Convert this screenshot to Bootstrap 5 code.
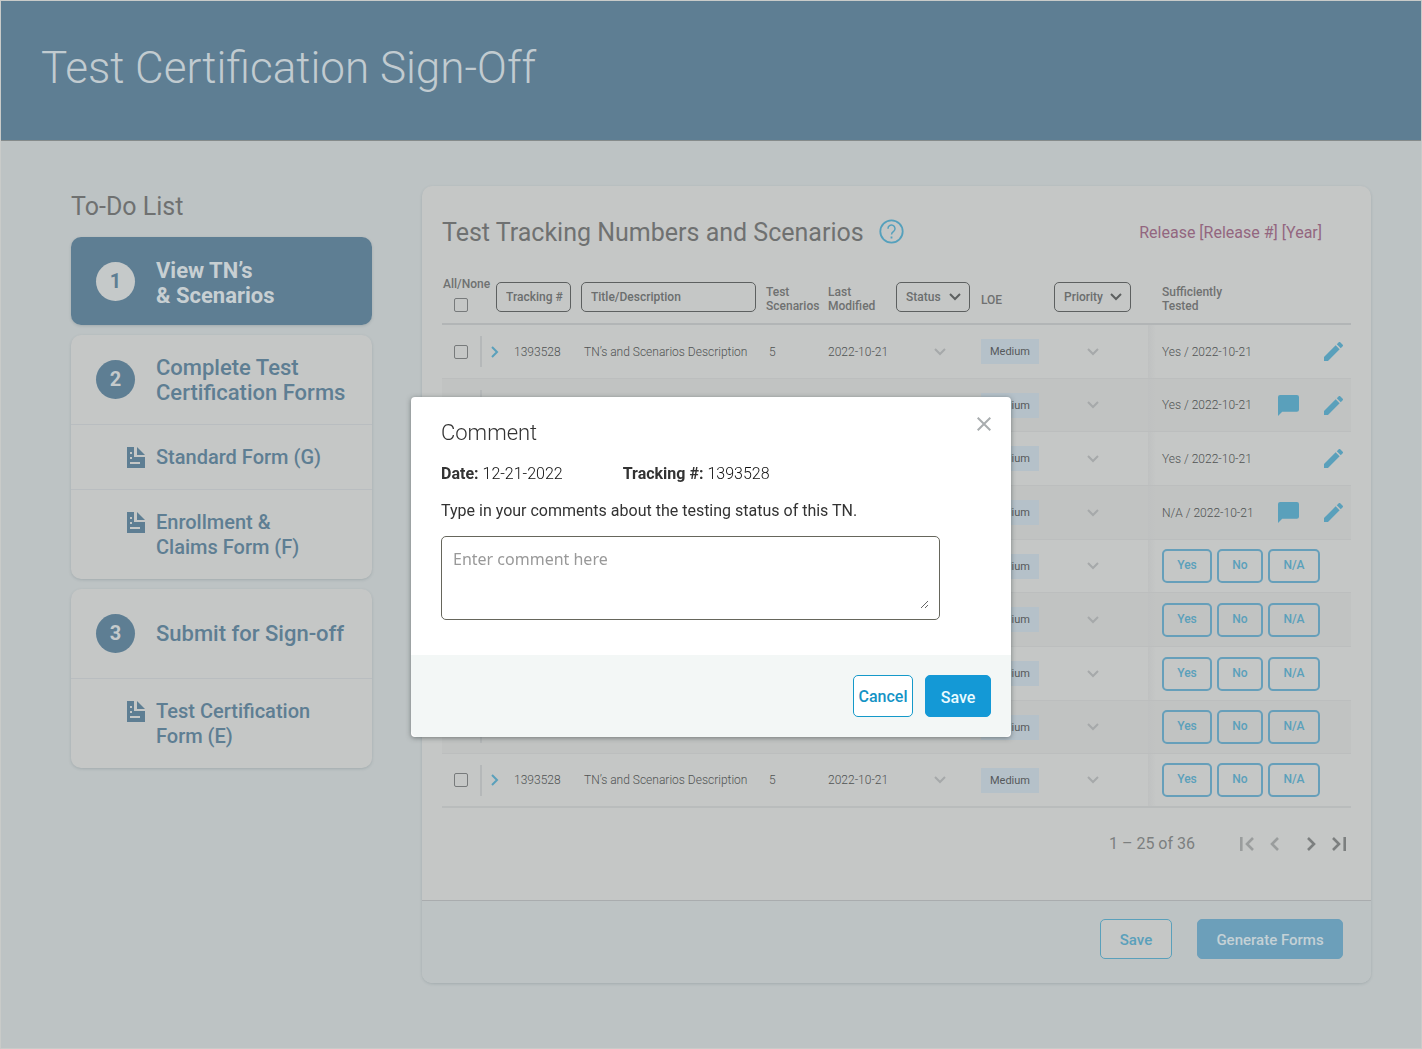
<!DOCTYPE html>
<html lang="en">
<head>
<meta charset="utf-8">
<meta name="viewport" content="width=device-width, initial-scale=1">
<title>Test Certification Sign-Off</title>
<link href="https://cdn.jsdelivr.net/npm/bootstrap@5.3.0/dist/css/bootstrap.min.css" rel="stylesheet">
<style>
  :root {
    --ink: #6f7171;
    --navy: #5e7e93;
    --sky: #5aa0bb;
    --panel: #c5c7c6;
    --page: #bdc3c4;
  }
  body { font-family: Roboto, "Liberation Sans", sans-serif; background: var(--page); color: var(--ink); min-height: 100vh; border: 1px solid #c9cbc9; }
  .site-head { background: var(--navy); border-bottom: 1px solid #858b8b; padding: 34px 40px 39px; }
  .site-head h1 { font-size: 44px; line-height: 66px; font-weight: 300; color: #c1cbd0; }
  .page-main { padding: 45px 50px 64px 70px; gap: 50px; }
  .todo { width: 301px; }
  .todo h2 { font-size: 25px; line-height: 42px; font-weight: 400; margin-bottom: 9px; }
  .todo-group { background: var(--panel); border-radius: 10px; box-shadow: 0 1px 3px rgba(60,80,90,.2); margin-bottom: 10px; overflow: hidden; }
  .todo-group a { color: var(--navy); text-decoration: none; font-size: 22px; line-height: 25px; font-weight: 500; min-height: 89px; padding: 0 24px 0 25px; }
  .todo-group a.sub-item { font-size: 20px; padding: 20px 24px 19px 56px; gap: 11px; min-height: 65px; border-top: 1px solid #b9bdc0; }
  .todo-group a.current { background: var(--navy); color: #c7cfd2; font-weight: 700; min-height: 88px; }
  .current .step-text { padding-top: 4px; }
  .doc-icon { width: 18px; height: 21px; margin-top: 2px; fill: currentColor; flex-shrink: 0; }
  .step-no { width: 39px; height: 39px; margin-right: 21px; background: var(--navy); color: #c5cacb; font-size: 20px; font-weight: 700; }
  .current .step-no { background: #c5c9c9; color: var(--navy); }
  .panel-box { background: var(--panel); border-radius: 10px; box-shadow: 0 1px 3px rgba(60,80,90,.2); overflow: hidden; }
  .panel-head { padding: 24px 49px 30px 20px; }
  .panel-head h2 { font-size: 25px; line-height: 42px; font-weight: 400; padding-top: 2px; margin: 0 0 -2px; }
  .panel-name { gap: 15px; }
  .release { font-size: 16px; color: #93667f; padding-top: 4px; }
  .track-area { padding: 0 20px; }
  .track { table-layout: fixed; width: 100%; font-size: 12px; line-height: 14px; border-collapse: separate; border-spacing: 0; }
  .track th { height: 43px; font-weight: 500; vertical-align: top; padding: 0; border-bottom: 2px solid #b2b5b6; color: #6f7171; }
  .track td { height: 54px; padding: 0; border-bottom: 1px solid #bcbebe; vertical-align: middle; font-weight: 300; color: #505353; }
  .track tr:nth-child(3n+2) td { height: 53px; }
  .track tbody tr:nth-child(even) { background: #c1c3c2; }
  .track tbody tr:last-child td { border-bottom: 2px solid #b9bcbc; }
  .c-check { width: 38px; } .c-num { width: 101px; } .c-tests { width: 62px; } .c-date { width: 68px; }
  .c-status { width: 85px; } .c-loe { width: 73px; } .c-prio { width: 94px; } .c-done { width: 203px; }
  .track th.two-line { padding-top: 3px; }
  .all-label { display: block; margin: -5px 0 7px 1px; white-space: nowrap; }
  .filter { height: 30px; border: 1px solid #5d6060; border-radius: 5px; background-color: transparent; color: #6b6e6e; font-size: 12px; font-weight: 500; padding: 0 9px; }
  .filter::placeholder { color: #6b6e6e; opacity: 1; }
  .f-num { width: 75px; margin-left: 16px; padding-right: 4px; } .f-title { width: 175px; } .f-status { width: 74px; } .f-prio { width: 77px; }
  select.filter { appearance: none; background: transparent url("data:image/svg+xml,%3Csvg xmlns='http://www.w3.org/2000/svg' width='12' height='8'%3E%3Cpath d='M1 1l5 5 5-5' fill='none' stroke='%235d6060' stroke-width='2'/%3E%3C/svg%3E") no-repeat right 8px center; }
  .tick { appearance: none; display: block; width: 14px; height: 14px; margin: 0 0 0 12px; border: 1px solid #777a7b; border-radius: 2px; background: transparent; }
  .plain-btn { border: 0; background: none; padding: 0; color: inherit; display: inline-flex; }
  .blue-btn { color: var(--sky); } .pale-btn { color: #a6a9aa; }
  .blue-btn svg { fill: currentColor; }
  .opener { border-left: 2px solid #b5b8b9; height: 31px; padding-left: 9px; gap: 15px; }
  .cell-text { padding-left: 3px; }
  .status-cell { padding-left: 38px; } .prio-cell { padding-left: 33px; }
  .loe-tag { display: inline-block; width: 58px; background: #b5c1c9; color: #55595b; font-size: 11px; font-weight: 400; line-height: 25px; text-align: center; }
  .done-cell { background: linear-gradient(90deg, #bfc1c1, transparent 8px); }
  .done-line { gap: 5px; padding-left: 14px; padding-right: 8px; }
  .answer { height: 34px; border: 2px solid #669fba; border-radius: 5px; background: none; color: var(--sky); font-size: 12px; font-weight: 500; padding: 0 0 2px; }
  .w-yes { width: 50px; } .w-no { width: 46px; } .w-na { width: 52px; }
  .pager { padding: 21px 25px 41px; font-size: 16px; line-height: 30px; color: #7c7f7f; }
  .pager-count { margin-right: 45px; }
  .pager-back { color: #9a9d9d; }
  .panel-foot { background: var(--page); border-top: 1px solid #a9acae; padding: 18px 28px 24px; gap: 25px; }
  .foot-btn { height: 40px; min-width: 72px; border: 1px solid var(--sky); border-radius: 5px; background: var(--panel); color: var(--sky); font-size: 15px; font-weight: 500; padding: 2px 18px 0; }
  .foot-btn.solid { min-width: 146px; background: #6c9fba; border-color: #6c9fba; color: #c4d1d6; }
  .comment-modal { padding-top: 397px; overflow: hidden; }
  .comment-modal .modal-dialog { max-width: 600px; margin: 0 auto; }
  .comment-modal .modal-content { border: 0; border-radius: 4px; box-shadow: 0 1px 5px rgba(40,50,50,.5); overflow: hidden; color: #333; }
  .comment-modal .modal-body { padding: 20px 20px 35px 30px; font-size: 16px; line-height: 24px; }
  .comment-modal h3 { font-size: 22px; line-height: 30px; font-weight: 300; padding-top: 1px; }
  .facts { gap: 60px; margin: 14px 0 13px; }
  .fact-value { font-weight: 300; color: #111; }
  .comment-box { width: 499px; max-width: 100%; border: 1px solid #66665c; border-radius: 5px; padding: 10px; margin-top: 13px; }
  .comment-box textarea { display: block; width: 100%; height: 62px; border: 0; padding: 0 1px; outline: 0; font: 16px/24px "Noto Sans", sans-serif; }
  .comment-box textarea::placeholder { color: #999; opacity: 1; }
  .comment-modal .modal-footer { background: #f3f7f6; border: 0; padding: 20px; gap: 12px; }
  .comment-modal .modal-footer > * { margin: 0; }
  .modal-btn { height: 42px; min-width: 60px; border: 1px solid #1599c9; border-radius: 5px; background: #fff; color: #1593c5; font-size: 16px; font-weight: 500; padding: 1px 4px 0; }
  .modal-btn.solid { min-width: 66px; background: #1499d6; border-color: #1499d6; color: #e9fbff; padding: 3px 14px 0; }
</style>
</head>
<body>
<svg width="0" height="0" class="position-absolute" aria-hidden="true">
  <symbol id="i-doc" viewBox="0 0 18 21"><path fill-rule="evenodd" d="M0 0h7v10h11v11H0zM3 5v2h2V5zM3 10v2h2v-2zM3 15v2h10v-2zM10 0l8 8h-8z"/></symbol>
  <symbol id="i-down" viewBox="0 0 12 8"><path d="M1 1l5 5 5-5" fill="none" stroke="currentColor" stroke-width="2"/></symbol>
  <symbol id="i-next" viewBox="0 0 8 12"><path d="M1 1l5 5-5 5" fill="none" stroke="currentColor" stroke-width="2"/></symbol>
  <symbol id="i-edit" viewBox="3 3 18 18"><path d="M3 17.25V21h3.75L17.81 9.94l-3.75-3.75zM20.71 7.04a1 1 0 0 0 0-1.41l-2.34-2.34a1 1 0 0 0-1.41 0l-1.83 1.83 3.75 3.75z"/></symbol>
  <symbol id="i-chat" viewBox="2 2 20 20"><path d="M20 2H4a2 2 0 0 0-2 2v18l4-4h14a2 2 0 0 0 2-2V4a2 2 0 0 0-2-2z"/></symbol>
</svg>

<header class="site-head"><h1 class="m-0">Test Certification Sign-Off</h1></header>

<main class="page-main d-flex align-items-start">
  <nav class="todo flex-shrink-0" aria-label="To-Do List">
    <h2>To-Do List</h2>
    <div class="todo-group">
      <a href="#" class="current d-flex align-items-center"><span class="step-no rounded-circle d-flex align-items-center justify-content-center flex-shrink-0">1</span><span class="step-text">View TN’s<br>&amp; Scenarios</span></a>
    </div>
    <div class="todo-group">
      <a href="#" class="d-flex align-items-center"><span class="step-no rounded-circle d-flex align-items-center justify-content-center flex-shrink-0">2</span><span class="step-text">Complete Test<br>Certification Forms</span></a>
      <a href="#" class="sub-item d-flex"><svg class="doc-icon" aria-hidden="true"><use href="#i-doc"/></svg><span>Standard Form (G)</span></a>
      <a href="#" class="sub-item d-flex"><svg class="doc-icon" aria-hidden="true"><use href="#i-doc"/></svg><span>Enrollment &amp;<br>Claims Form (F)</span></a>
    </div>
    <div class="todo-group">
      <a href="#" class="d-flex align-items-center"><span class="step-no rounded-circle d-flex align-items-center justify-content-center flex-shrink-0">3</span><span class="step-text">Submit for Sign-off</span></a>
      <a href="#" class="sub-item d-flex"><svg class="doc-icon" aria-hidden="true"><use href="#i-doc"/></svg><span>Test Certification<br>Form (E)</span></a>
    </div>
  </nav>

  <section class="panel-box flex-grow-1">
    <div class="panel-head d-flex justify-content-between align-items-center">
      <div class="panel-name d-flex align-items-center">
        <h2>Test Tracking Numbers and Scenarios</h2>
        <button type="button" class="plain-btn" aria-label="Help"><svg width="25" height="25" viewBox="0 0 25 25" fill="none" stroke="#55a0bc"><circle cx="12.5" cy="12.5" r="11.2" stroke-width="1.8"/><path d="M9 9.8a3.5 3.5 0 1 1 5.6 2.6c-1.4 1-2.1 1.6-2.1 3.2" stroke-width="1.5"/><path d="M12.5 17.5v2" stroke-width="1.8"/></svg></button>
      </div>
      <div class="release">Release [Release #] [Year]</div>
    </div>

    <div class="track-area">
      <table class="track">
        <colgroup><col class="c-check"><col class="c-num"><col><col class="c-tests"><col class="c-date"><col class="c-status"><col class="c-loe"><col class="c-prio"><col class="c-done"></colgroup>
        <thead>
          <tr>
            <th><label for="all" class="all-label">All/None</label><input id="all" type="checkbox" class="tick"></th>
            <th><input class="filter f-num" placeholder="Tracking #" aria-label="Tracking #"></th>
            <th><input class="filter f-title" placeholder="Title/Description" aria-label="Title/Description"></th>
            <th class="two-line">Test<br>Scenarios</th>
            <th class="two-line">Last<br>Modified</th>
            <th><select class="filter f-status" aria-label="Status"><option>Status</option></select></th>
            <th class="two-line"><div class="pt-2">LOE</div></th>
            <th><select class="filter f-prio" aria-label="Priority"><option>Priority</option></select></th>
            <th class="two-line"><div class="done-line">Sufficiently<br>Tested</div></th>
          </tr>
        </thead>
        <tbody id="rows"></tbody>
      </table>
    </div>

    <div class="pager d-flex justify-content-end align-items-center">
      <span class="pager-count">1 – 25 of 36</span>
      <span class="d-flex pager-back">
        <button type="button" class="plain-btn" aria-label="First page"><svg width="14" height="16" viewBox="0 0 14 16" fill="none" stroke="currentColor" stroke-width="2.6"><path d="M1.3 1v14M13 2L7 8l6 6"/></svg></button>
        <button type="button" class="plain-btn ms-3" aria-label="Previous page"><svg width="9" height="16" viewBox="0 0 9 16" fill="none" stroke="currentColor" stroke-width="2.6"><path d="M8 2L2 8l6 6"/></svg></button>
      </span>
      <span class="d-flex ms-4">
        <button type="button" class="plain-btn ms-1" aria-label="Next page"><svg width="9" height="16" viewBox="0 0 9 16" fill="none" stroke="currentColor" stroke-width="2.6"><path d="M1 2l6 6-6 6"/></svg></button>
        <button type="button" class="plain-btn ms-3" aria-label="Last page"><svg width="14" height="16" viewBox="0 0 14 16" fill="none" stroke="currentColor" stroke-width="2.6"><path d="M1 2l6 6-6 6M12.7 1v14"/></svg></button>
      </span>
    </div>

    <div class="panel-foot d-flex justify-content-end">
      <button type="button" class="foot-btn">Save</button>
      <button type="button" class="foot-btn solid">Generate Forms</button>
    </div>
  </section>
</main>

<div class="modal comment-modal show d-block" tabindex="-1" role="dialog" aria-labelledby="cTitle">
  <div class="modal-dialog">
    <div class="modal-content">
      <div class="modal-body">
        <div class="d-flex justify-content-between align-items-start">
          <h3 class="mb-0" id="cTitle">Comment</h3>
          <button type="button" class="plain-btn" aria-label="Close"><svg width="14" height="14" viewBox="0 0 14 14" stroke="#a9adaf" stroke-width="2"><path d="M.7.7l12.6 12.6M13.3.7L.7 13.3"/></svg></button>
        </div>
        <div class="facts d-flex"><span><b>Date:</b> <span class="fact-value">12-21-2022</span></span><span><b>Tracking #:</b> <span class="fact-value">1393528</span></span></div>
        <label for="comment" class="d-block">Type in your comments about the testing status of this TN.</label>
        <div class="comment-box"><textarea id="comment" placeholder="Enter comment here"></textarea></div>
      </div>
      <div class="modal-footer">
        <button type="button" class="modal-btn">Cancel</button>
        <button type="button" class="modal-btn solid">Save</button>
      </div>
    </div>
  </div>
</div>

<script src="https://cdn.jsdelivr.net/npm/bootstrap@5.3.0/dist/js/bootstrap.bundle.min.js"></script>
<script>
  const results = [
    { text: 'Yes / 2022-10-21' },
    { text: 'Yes / 2022-10-21', note: true },
    { text: 'Yes / 2022-10-21' },
    { text: 'N/A / 2022-10-21', note: true },
    {}, {}, {}, {}, {}
  ];
  const down = label => `<button type="button" class="plain-btn pale-btn" aria-label="${label}"><svg width="12" height="8"><use href="#i-down"/></svg></button>`;
  const answered = r => `<span class="flex-grow-1">${r.text}</span>
    ${r.note ? '<button type="button" class="plain-btn blue-btn me-3" aria-label="Comment"><svg width="21" height="21"><use href="#i-chat"/></svg></button>' : ''}
    <button type="button" class="plain-btn blue-btn ms-1" aria-label="Edit"><svg width="19" height="19"><use href="#i-edit"/></svg></button>`;
  const open = `<button type="button" class="answer w-yes">Yes</button><button type="button" class="answer w-no">No</button><button type="button" class="answer w-na">N/A</button>`;
  document.getElementById('rows').innerHTML = results.map((r, i) => `
    <tr>
      <td><input type="checkbox" class="tick" aria-label="Select row ${i + 1}"></td>
      <td><div class="opener d-flex align-items-center"><button type="button" class="plain-btn blue-btn" aria-label="Expand"><svg width="8" height="12"><use href="#i-next"/></svg></button>1393528</div></td>
      <td><div class="cell-text">TN’s and Scenarios Description</div></td>
      <td><div class="cell-text">5</div></td>
      <td>2022-10-21</td>
      <td><div class="status-cell">${down('Status')}</div></td>
      <td><span class="loe-tag">Medium</span></td>
      <td><div class="prio-cell">${down('Priority')}</div></td>
      <td class="done-cell"><div class="done-line d-flex align-items-center">${r.text ? answered(r) : open}</div></td>
    </tr>`).join('');
</script>
</body>
</html>
